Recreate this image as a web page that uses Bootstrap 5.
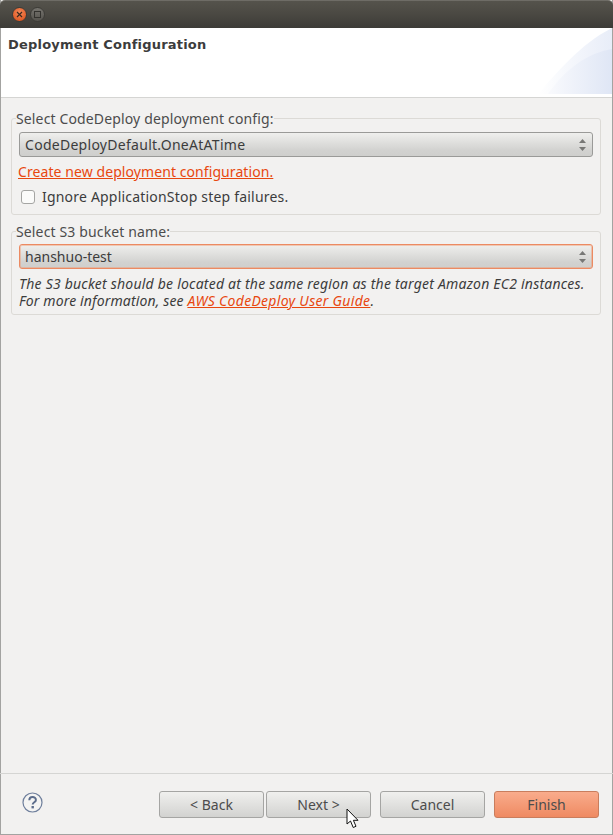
<!DOCTYPE html>
<html lang="en">
<head>
<meta charset="utf-8">
<title>Deployment Configuration</title>
<link href="https://cdn.jsdelivr.net/npm/bootstrap@5.3.0/dist/css/bootstrap.min.css" rel="stylesheet">
<style>
html,body{height:100%;margin:0;background:#f2f1f0;}
body{font-family:"Noto Sans","Open Sans",sans-serif;font-size:14px;color:#3c3c3c;overflow:hidden;}
.win-frame{width:613px;height:835px;position:relative;background:#f2f1f0;border-left:1px solid #a3a3a1;border-right:1px solid #a3a3a1;border-bottom:1px solid #a3a3a1;}
.win-title{height:28px;margin:0 -1px;background:linear-gradient(#55534c,#4a4842 50%,#3c3b37);border-top:1px solid #6e6c66;border-radius:5px 5px 0 0;padding-left:12px;gap:3px;}
.wbtn{width:15px;height:15px;border-radius:50%;}
.wbtn-close{background:radial-gradient(circle at 50% 35%,#f58a5a,#d94a14);border:1px solid #3c3b37;}
.wbtn-max{background:linear-gradient(#75736d,#55534e);border:1px solid #3c3b37;}
.wiz-head{height:70px;background:#fff;border-bottom:1px solid #d5d5d3;position:relative;padding:9px 7px;}
.wiz-head h1{font-family:"DejaVu Sans",sans-serif;font-weight:700;font-size:13px;line-height:16px;letter-spacing:.2px;margin:0;color:#3c3c3c;}
.head-art{position:absolute;right:0;top:0;}
.wiz-body{padding:11px 11px 0 10px;}
.grp{border:1px solid #dcdad6;border-radius:3px;padding:0 7px 0 7px;margin:0;}
.grp-one{height:106px;}
.grp-two{height:93px;margin-top:7px;}
.grp legend{float:none;width:auto;font-size:14px;line-height:19px;margin:0 0 0 -3px;padding:0;color:#4c4c4c;letter-spacing:.14px;}
.grp-one legend{margin-bottom:4px;}
.grp-two legend{margin-bottom:3px;}
.pick{position:relative;}
.pick select{display:block;width:100%;appearance:none;height:25px;padding:0 24px 0 5px;font:14px/23px "Noto Sans","Open Sans",sans-serif;color:#3c3c3c;border:1px solid #9a9a98;border-radius:3px;background:linear-gradient(#efefed,#d2d2d0 75%,#cfcfcd);outline:0;}
.pick-wide select{letter-spacing:.28px;}
.pick-hot select{border:1px solid #ec8a62;box-shadow:0 0 0 1px rgba(240,150,110,.45) inset;}
.pick svg{position:absolute;right:7px;top:7px;}
.orange-link{color:#e8470f;text-decoration:underline;}
.link-row{line-height:19px;margin:5px 0 0 -1px;letter-spacing:.08px;}
.check-row{margin-top:6px;padding-left:2px;gap:7px;line-height:19px;letter-spacing:.2px;}
.fake-check{width:14px;height:14px;margin:0;flex:none;appearance:none;background:#fbfbfa;border:1px solid #a5a5a3;border-radius:3px;}
.note{font-style:italic;font-size:14px;line-height:17px;margin:6px 0 0;white-space:nowrap;letter-spacing:.22px;color:#3c3c3c;}
.note-tail{letter-spacing:.14px;}
.note-tail a{letter-spacing:.3px;}
.wiz-foot{position:absolute;left:-1px;right:-1px;top:773px;height:61px;border-top:1px solid #d5d5d3;padding:17px 14px 0 22px;}
.help-ico{display:block;margin-top:1px;}
.wbtn-act{width:105px;height:27px;padding:0;font:14px/25px "Noto Sans","Open Sans",sans-serif;color:#4c4c4c;border:1px solid #a5a5a3;border-radius:3px;background:linear-gradient(#f0f0ee,#d2d2d0);}
.wbtn-act:hover{color:#4c4c4c;border-color:#a5a5a3;}
.wbtn-go{background:linear-gradient(#f9ac8c,#ef8a62);border-color:#c97d5d;}
.act-gap{gap:2px;}
.act-wide{margin-left:7px;}
.mouse{position:absolute;left:346px;top:34px;pointer-events:none;}
</style>
</head>
<body>
<div class="win-frame">
  <div class="win-title d-flex align-items-center">
    <span class="wbtn wbtn-close d-flex align-items-center justify-content-center">
      <svg width="7" height="7" viewBox="0 0 7 7"><path d="M1 1l5 5M6 1L1 6" stroke="#3c2a20" stroke-width="1.2"/></svg>
    </span>
    <span class="wbtn wbtn-max d-flex align-items-center justify-content-center">
      <svg width="7" height="7" viewBox="0 0 7 7"><rect x=".5" y=".5" width="6" height="6" fill="none" stroke="#33322e"/></svg>
    </span>
  </div>
  <div class="wiz-head">
    <h1>Deployment Configuration</h1>
    <svg class="head-art" width="74" height="66" viewBox="0 0 74 66">
      <defs>
        <linearGradient id="g1" x1="0" x2="1" y1="0" y2="0"><stop offset="0" stop-color="#fff"/><stop offset="1" stop-color="#e8edf8"/></linearGradient>
        <linearGradient id="g2" x1="0" x2="1" y1="0" y2="0"><stop offset="0" stop-color="#f9fafd"/><stop offset="1" stop-color="#dfe6f5"/></linearGradient>
      </defs>
      <path d="M0 66C18 46 42 16 74 0V66Z" fill="url(#g1)"/>
      <path d="M10 66C28 40 50 25 74 21V66Z" fill="url(#g2)"/>
    </svg>
  </div>
  <div class="wiz-body">
    <fieldset class="grp grp-one">
      <legend>Select CodeDeploy deployment config:</legend>
      <div class="pick pick-wide">
        <select aria-label="Deployment config"><option>CodeDeployDefault.OneAtATime</option></select>
        <svg width="7" height="12" viewBox="0 0 7 12"><path d="M3.5 0L7 4H0ZM0 8h7L3.5 12Z" fill="#777775"/></svg>
      </div>
      <div class="link-row"><a class="orange-link" href="#">Create new deployment configuration.</a></div>
      <label class="check-row d-flex align-items-center">
        <input class="fake-check" type="checkbox">
        <span>Ignore ApplicationStop step failures.</span>
      </label>
    </fieldset>
    <fieldset class="grp grp-two">
      <legend>Select S3 bucket name:</legend>
      <div class="pick pick-hot">
        <select aria-label="S3 bucket"><option>hanshuo-test</option></select>
        <svg width="7" height="12" viewBox="0 0 7 12"><path d="M3.5 0L7 4H0ZM0 8h7L3.5 12Z" fill="#777775"/></svg>
      </div>
      <p class="note">The S3 bucket should be located at the same region as the target Amazon EC2 instances.<br><span class="note-tail">For more information, see <a class="orange-link" href="#">AWS CodeDeploy User Guide</a>.</span></p>
    </fieldset>
  </div>
  <div class="wiz-foot d-flex justify-content-between align-items-start">
    <svg class="help-ico" width="21" height="21" viewBox="0 0 21 21" aria-label="Help">
      <circle cx="10.5" cy="10.5" r="9.5" fill="#f4f4f3" stroke="#6f7f9c" stroke-width="1.2"/>
      <path d="M7.3 8.2c0-4.2 6.6-4.2 6.6-.3 0 2.4-3.2 2.3-3.2 4.6" fill="none" stroke="#5c6d8c" stroke-width="2"/>
      <rect x="9.5" y="14" width="2.4" height="2.4" fill="#5c6d8c"/>
    </svg>
    <div class="d-flex act-gap">
      <button class="btn wbtn-act" type="button">&lt; Back</button>
      <button class="btn wbtn-act" type="button">Next &gt;</button>
      <button class="btn wbtn-act act-wide" type="button">Cancel</button>
      <button class="btn wbtn-act wbtn-go act-wide" type="button">Finish</button>
    </div>
    <svg class="mouse" width="14" height="21" viewBox="0 0 14 21"><path d="M1 1V16L4.5 13L7.2 19.5L10 18.3L7.4 12.3H12Z" fill="#fff" stroke="#111" stroke-width="1"/></svg>
  </div>
</div>
<script src="https://cdn.jsdelivr.net/npm/bootstrap@5.3.0/dist/js/bootstrap.bundle.min.js"></script>
</body>
</html>
